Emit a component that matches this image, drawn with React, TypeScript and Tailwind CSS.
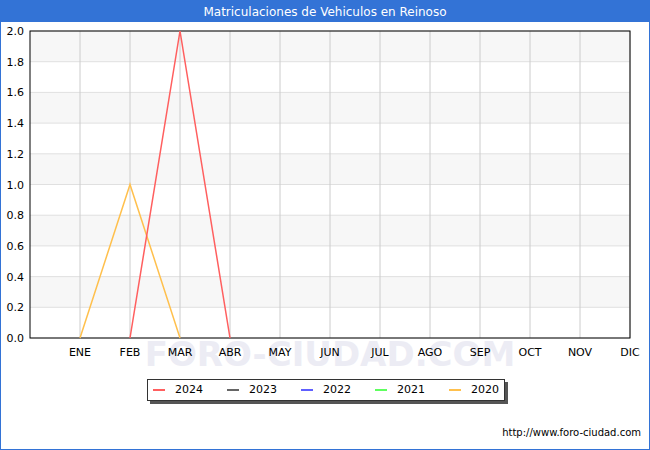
const MONTHS = ["ENE", "FEB", "MAR", "ABR", "MAY", "JUN", "JUL", "AGO", "SEP", "OCT", "NOV", "DIC"];
const LEGEND = [
  { label: "2024", color: "#ff5f5f" },
  { label: "2023", color: "#666666" },
  { label: "2022", color: "#5f5fff" },
  { label: "2021", color: "#5fff5f" },
  { label: "2020", color: "#ffc04d" },
];

// coordinates are in page pixels; the svg sits below the 22px title bar
const X0 = 30, X1 = 630, Y0 = 31, Y1 = 338;
const y = (v: number) => Y1 - (v / 2) * (Y1 - Y0);

function Chart() {
  const ticks = Array.from({ length: 11 }, (_, i) => i * 0.2);
  return (
    <svg width={650} height={350} className="block" style={{ fontFamily: "DejaVu Sans, sans-serif" }}>
      <g transform="translate(0,-22)">
        {ticks.slice(0, 10).map((t, i) =>
          i % 2 === 0 ? null : (
            <rect key={t} x={X0} y={y(t + 0.2)} width={X1 - X0} height={y(t) - y(t + 0.2)} fill="#f7f7f7" />
          )
        )}
        {ticks.map((t) => (
          <line key={t} x1={X0} x2={X1} y1={y(t)} y2={y(t)} stroke="#e0e0e0" />
        ))}
        {MONTHS.map((m, i) => (
          <line key={m} x1={80 + i * 50} x2={80 + i * 50} y1={Y0} y2={Y1} stroke="#cccccc" />
        ))}
        <rect x={X0} y={Y0} width={X1 - X0} height={Y1 - Y0} fill="none" stroke="#000" />
        <text x={330} y={366} textAnchor="middle" fontSize={34} fill="#ececf4" fontWeight="bold">FORO-CIUDAD.COM</text>
        {ticks.map((t) => (
          <text key={t} x={24} y={y(t) + 4} textAnchor="end" fontSize={11} fill="#000">{t.toFixed(1)}</text>
        ))}
        {MONTHS.map((m, i) => (
          <text key={m} x={80 + i * 50} y={356} textAnchor="middle" fontSize={11} fill="#000">{m}</text>
        ))}
        <polyline points={`80,${Y1} 130,${y(1)} 180,${Y1}`} fill="none" stroke="#ffc04d" strokeWidth={1.5} />
        <polyline points={`130,${Y1} 180,${y(2)} 230,${Y1}`} fill="none" stroke="#ff5f5f" strokeWidth={1.5} />
      </g>
    </svg>
  );
}

export default function App() {
  return (
    <div className="w-[650px] h-[450px] bg-white border border-[#3373d6] flex flex-col overflow-hidden" style={{ fontFamily: "DejaVu Sans, sans-serif" }}>
      <div className="h-[21px] shrink-0 bg-[#3373d6] text-white text-[12px] flex items-center justify-center">
        Matriculaciones de Vehiculos en Reinoso
      </div>
      <div className="-ml-[1px]">
        <Chart />
      </div>
      <div className="flex justify-center mt-[7px] pl-[2px]">
        <div className="flex items-center gap-[24px] border border-[#333] shadow-[3px_3px_0_#555] h-[22px] px-[5px] text-[11px] text-black">
          {LEGEND.map((l) => (
            <div key={l.label} className="flex items-center gap-[10px]">
              <span className="inline-block w-[12px] h-[2px]" style={{ background: l.color }} />
              {l.label}
            </div>
          ))}
        </div>
      </div>
      <div className="text-right pr-[8px] mt-[24px] text-[10px] text-black">http://www.foro-ciudad.com</div>
    </div>
  );
}
